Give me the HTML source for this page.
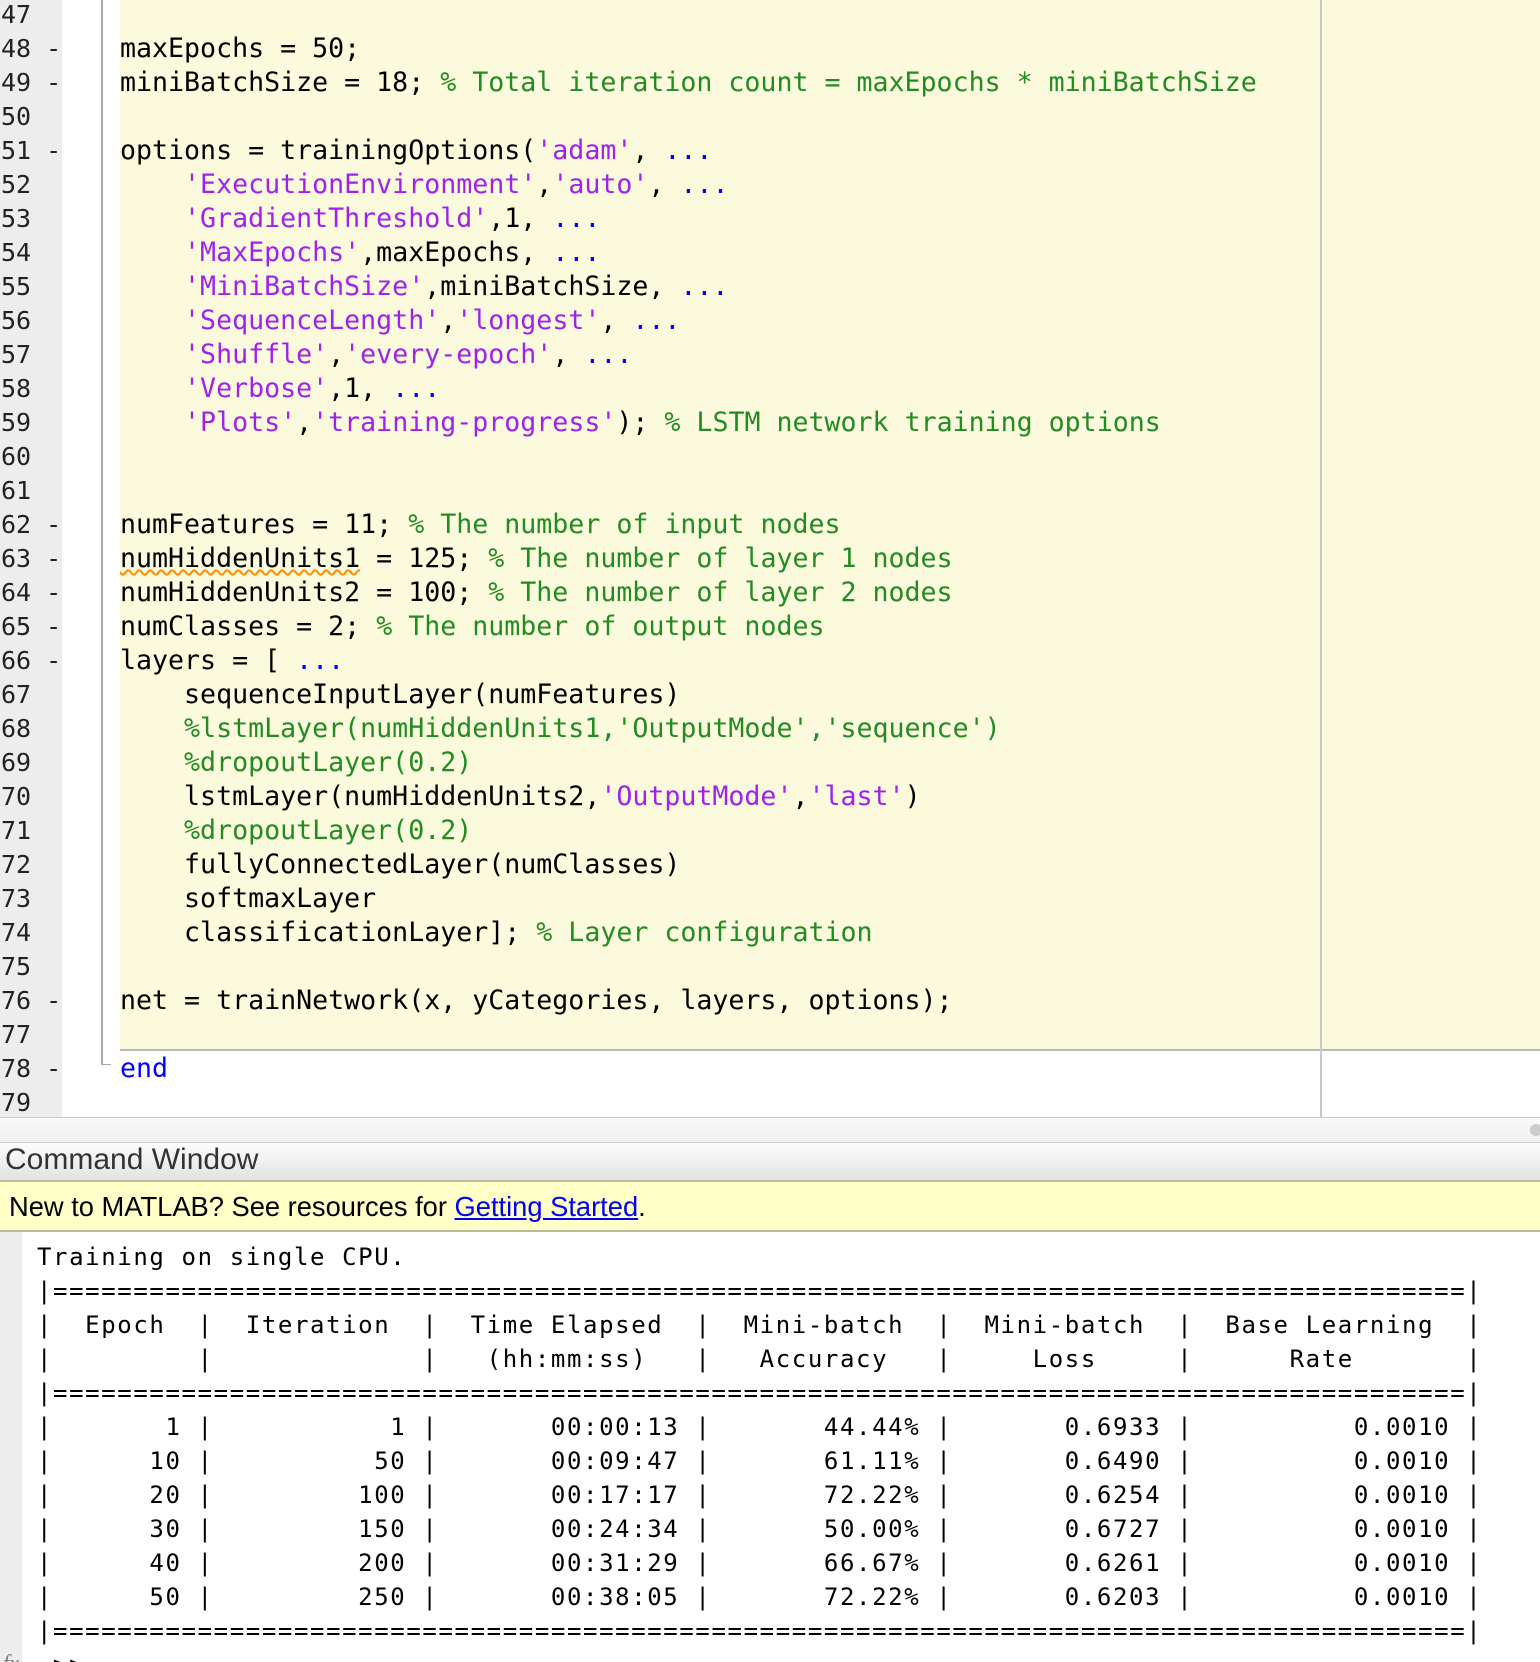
<!DOCTYPE html>
<html><head><meta charset="utf-8"><style>
html,body{margin:0;padding:0;width:1540px;height:1662px;overflow:hidden;background:#fff;position:relative}
.abs{position:absolute}
pre{margin:0;font-family:"DejaVu Sans Mono","Liberation Mono",monospace;font-size:26.6px;line-height:34px;white-space:pre}
.k{color:#0000ff}.s{color:#a020f0}.c{color:#228b22}
.sq{text-decoration:underline wavy #ff8c00;text-decoration-thickness:1.5px;text-underline-offset:2px}
.cmd{font-size:24px;letter-spacing:1.61px;color:#000}
</style></head><body>
<div class="abs" style="left:0;top:0;width:62px;height:1118px;background:#ededed"></div>
<div class="abs" style="left:120px;top:0;width:1420px;height:1050px;background:#fcfadc"></div>
<div class="abs" style="left:120px;top:1049px;width:1420px;height:2px;background:#b8b8b8"></div>
<div class="abs" style="left:1320px;top:0;width:2px;height:1118px;background:#c8c8c8"></div>
<div class="abs" style="left:101px;top:0;width:2px;height:1065px;background:#a8a8a8"></div>
<div class="abs" style="left:101px;top:1064px;width:10px;height:1px;background:#a8a8a8"></div>
<pre class="abs" style="left:1px;top:-2px;color:#222;font-size:25px">47
48 -
49 -
50
51 -
52
53
54
55
56
57
58
59
60
61
62 -
63 -
64 -
65 -
66 -
67
68
69
70
71
72
73
74
75
76 -
77
78 -
79</pre>
<pre class="abs" style="left:120px;top:-2px;color:#000">

maxEpochs = 50;
miniBatchSize = 18; <span class="c">% Total iteration count = maxEpochs * miniBatchSize</span>

options = trainingOptions(<span class="s">'adam'</span>, <span class="k">...</span>
    <span class="s">'ExecutionEnvironment'</span>,<span class="s">'auto'</span>, <span class="k">...</span>
    <span class="s">'GradientThreshold'</span>,1, <span class="k">...</span>
    <span class="s">'MaxEpochs'</span>,maxEpochs, <span class="k">...</span>
    <span class="s">'MiniBatchSize'</span>,miniBatchSize, <span class="k">...</span>
    <span class="s">'SequenceLength'</span>,<span class="s">'longest'</span>, <span class="k">...</span>
    <span class="s">'Shuffle'</span>,<span class="s">'every-epoch'</span>, <span class="k">...</span>
    <span class="s">'Verbose'</span>,1, <span class="k">...</span>
    <span class="s">'Plots'</span>,<span class="s">'training-progress'</span>); <span class="c">% LSTM network training options</span>


numFeatures = 11; <span class="c">% The number of input nodes</span>
<span class="sq">numHiddenUnits1</span> = 125; <span class="c">% The number of layer 1 nodes</span>
numHiddenUnits2 = 100; <span class="c">% The number of layer 2 nodes</span>
numClasses = 2; <span class="c">% The number of output nodes</span>
layers = [ <span class="k">...</span>
    sequenceInputLayer(numFeatures)
    <span class="c">%lstmLayer(numHiddenUnits1,'OutputMode','sequence')</span>
    <span class="c">%dropoutLayer(0.2)</span>
    lstmLayer(numHiddenUnits2,<span class="s">'OutputMode'</span>,<span class="s">'last'</span>)
    <span class="c">%dropoutLayer(0.2)</span>
    fullyConnectedLayer(numClasses)
    softmaxLayer
    classificationLayer]; <span class="c">% Layer configuration</span>

net = trainNetwork(x, yCategories, layers, options);

<span class="k">end</span></pre>
<!-- separator -->
<div class="abs" style="left:0;top:1117px;width:1540px;height:24px;background:linear-gradient(#fafafa,#f0f0f0);border-top:1px solid #c5ccd6;border-bottom:2px solid #c5ccd6"></div>
<div class="abs" style="left:1530px;top:1124px;width:12px;height:12px;border-radius:6px;background:#ccc"></div>
<div class="abs" style="left:0;top:1143px;width:1540px;height:37px;background:linear-gradient(#fdfdfd,#e2e2e2)"></div>
<div class="abs" style="left:5px;top:1141px;font-family:'Liberation Sans',sans-serif;font-size:30px;line-height:38px;color:#333">Command Window</div>
<div class="abs" style="left:0;top:1180px;width:1540px;height:48px;background:#ffffc8;border-top:2px solid #bdbd95;border-bottom:2px solid #bdbd95"></div>
<div class="abs" style="left:9px;top:1185px;font-family:'Liberation Sans',sans-serif;font-size:27.3px;line-height:44px;color:#000">New to MATLAB? See resources for <span style="color:#0000ee;text-decoration:underline">Getting Started</span>.</div>
<div class="abs" style="left:0;top:1232px;width:22px;height:430px;background:#ededed"></div>
<pre class="abs cmd" style="left:37px;top:1240px">Training on single CPU.
|========================================================================================|
|  Epoch  |  Iteration  |  Time Elapsed  |  Mini-batch  |  Mini-batch  |  Base Learning  |
|         |             |   (hh:mm:ss)   |   Accuracy   |     Loss     |      Rate       |
|========================================================================================|
|       1 |           1 |       00:00:13 |       44.44% |       0.6933 |          0.0010 |
|      10 |          50 |       00:09:47 |       61.11% |       0.6490 |          0.0010 |
|      20 |         100 |       00:17:17 |       72.22% |       0.6254 |          0.0010 |
|      30 |         150 |       00:24:34 |       50.00% |       0.6727 |          0.0010 |
|      40 |         200 |       00:31:29 |       66.67% |       0.6261 |          0.0010 |
|      50 |         250 |       00:38:05 |       72.22% |       0.6203 |          0.0010 |
|========================================================================================|
 &gt;&gt;</pre>
<div class="abs" style="left:3px;top:1650px;font-family:'Liberation Serif',serif;font-style:italic;font-size:22px;color:#777">fx</div>
</body></html>
